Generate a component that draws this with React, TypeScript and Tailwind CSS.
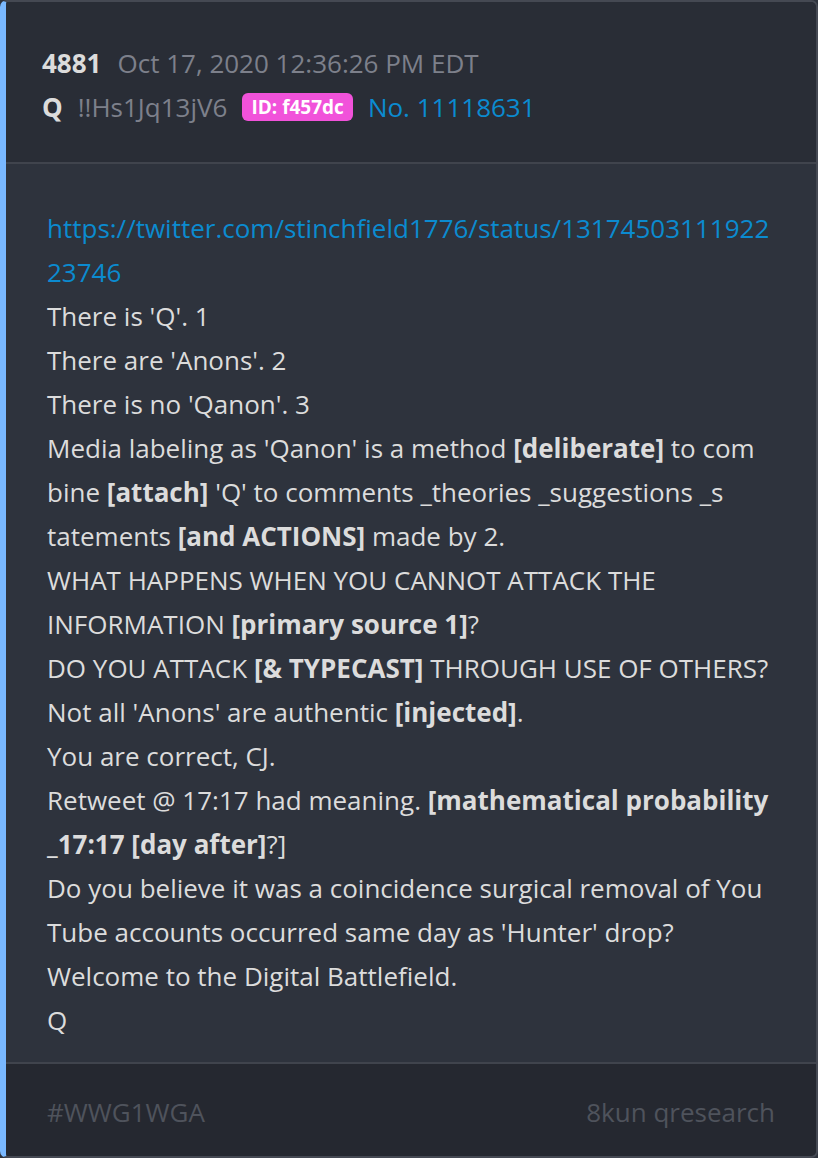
import React from "react";

const B = ({ children }: { children: React.ReactNode }) => (
  <span className="font-bold">{children}</span>
);

export default function App() {
  return (
    <div
      className="w-[818px] h-[1158px] bg-[#2e333d]"
      style={{ fontFamily: "'Open Sans', sans-serif" }}
    >
      <div className="w-full h-full flex flex-col rounded-[7px] border-2 border-l-[6px] border-[#454953] border-l-[#79b8ff] overflow-hidden">
        <div className="bg-[#292d36] pl-[36px] pt-[39px] pb-[33px] border-b-2 border-[#40444d] text-[26px] leading-[44px]">
          <div className="flex items-center gap-[16px]">
            <span className="font-bold text-[#dcdcdc]">4881</span>
            <span className="text-[#7d808b]">Oct 17, 2020 12:36:26 PM EDT</span>
          </div>
          <div className="flex items-center gap-[15px]">
            <span className="font-bold text-[#dcdcdc]">Q</span>
            <span className="text-[#7d808b]">!!Hs1Jq13jV6</span>
            <span className="bg-[#f152da] text-white font-bold text-[19px] leading-[28px] px-[9px] rounded-[6px]">
              ID: f457dc
            </span>
            <span className="text-[#0b8bd0]">No. 11118631</span>
          </div>
        </div>
        <div className="flex-1 bg-[#2e333d] pl-[41px] pr-[44px] pt-[42px] text-[26px] leading-[44px] text-[#dcdcdc] break-all">
          <div className="text-[#0b8bd0]">https://twitter.com/stinchfield1776/status/1317450311192223746</div>
          <div>There is 'Q'. 1</div>
          <div>There are 'Anons'. 2</div>
          <div>There is no 'Qanon'. 3</div>
          <div>
            Media labeling as 'Qanon' is a method <B>[deliberate]</B> to com<span className="break-normal">bine</span> <B>[attach]</B> 'Q' to comments _theories _suggestions _s<span className="break-normal">tatements</span> <B>[and ACTIONS]</B> made by 2.
          </div>
          <div>
            WHAT HAPPENS WHEN YOU CANNOT ATTACK THE <span className="break-normal">INFORMATION</span> <B>[primary source 1]</B>?
          </div>
          <div>
            DO YOU ATTACK <B>[&amp; TYPECAST]</B> THROUGH USE OF OTHERS?
          </div>
          <div>
            Not all 'Anons' are authentic <B>[injected]</B>.
          </div>
          <div>You are correct, CJ.</div>
          <div>
            Retweet @ 17:17 had meaning. <B>[mathematical probability _17:17 [day after]</B>?]
          </div>
          <div>
            Do you believe it was a coincidence surgical removal of YouTube accounts occurred same day as 'Hunter' drop?
          </div>
          <div>Welcome to the Digital Battlefield.</div>
          <div>Q</div>
        </div>
        <div className="h-[94px] bg-[#252830] border-t-2 border-[#40444d] flex items-center justify-between pl-[41px] pr-[41px] pt-[4px] text-[26px] text-[#4f535c]">
          <span>#WWG1WGA</span>
          <span>8kun qresearch</span>
        </div>
      </div>
    </div>
  );
}
